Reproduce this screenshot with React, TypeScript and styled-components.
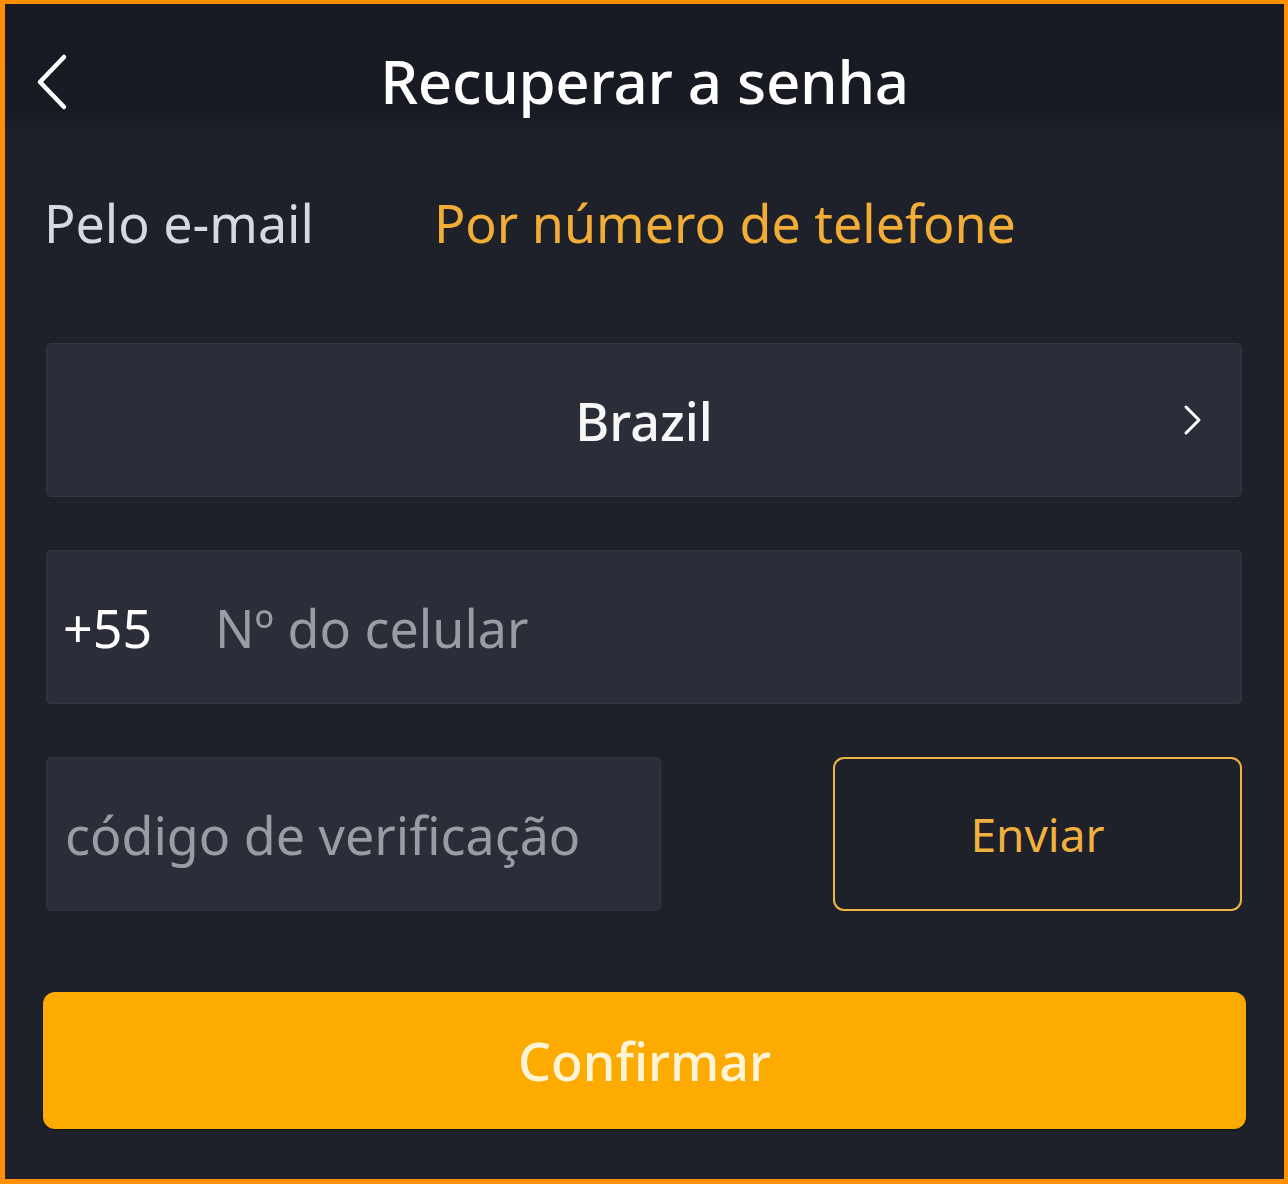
import styled, { createGlobalStyle } from "styled-components";

const GlobalStyle = createGlobalStyle`
  html, body {
    margin: 0;
    padding: 0;
    background: #1e212a;
  }
  * {
    box-sizing: border-box;
  }
`;

// Page frame
const Screen = styled.div`
  width: 1288px;
  height: 1184px;
  border: 4px solid #ff8f00;
  border-left-width: 5px;
  border-bottom-width: 5px;
  background: #1e212a;
  font-family: "Noto Sans", "Open Sans", sans-serif;
  display: flex;
  flex-direction: column;
  overflow: hidden;
`;

const Header = styled.header`
  height: 126px;
  flex-shrink: 0;
  background: linear-gradient(#171a22 0%, #181b23 85%, #1e212a 100%);
  display: grid;
  grid-template-columns: 120px 1fr 120px;
  align-items: center;
`;

const BackButton = styled.button`
  background: none;
  border: none;
  padding: 30px 0 0 29px;
  height: 100%;
  display: flex;
  align-items: center;
  cursor: pointer;
`;

const Title = styled.h1`
  margin: 0;
  text-align: center;
  color: #ffffff;
  font-size: 60px;
  font-weight: 500;
  letter-spacing: -0.3px;
  padding-top: 28px;
`;

const Tabs = styled.nav`
  display: flex;
  align-items: flex-start;
  gap: 120px;
  padding: 58px 0 0 39px;
  height: 213px;
`;

interface TabProps {
  $active?: boolean;
}

const Tab = styled.span<TabProps>`
  font-size: 52px;
  line-height: 70px;
  color: ${(p) => (p.$active ? "#f2ad36" : "#d8d9de")};
  cursor: pointer;
`;

const Form = styled.div`
  display: flex;
  flex-direction: column;
  padding: 0 42px 0 41px;
  gap: 53px;
`;

const Field = styled.div`
  height: 154px;
  background: #2b2e38;
  border: 1px solid #343742;
  border-radius: 5px;
  display: flex;
  align-items: center;
  font-size: 52px;
`;

const SelectField = styled(Field)`
  justify-content: center;
  position: relative;
  cursor: pointer;
`;

const Country = styled.span`
  color: #f7f7f8;
  font-weight: 500;
`;

const ChevronSlot = styled.span`
  position: absolute;
  right: 38px;
  top: 50%;
  transform: translateY(-50%);
  display: flex;
`;

const Prefix = styled.span`
  color: #ffffff;
  padding-left: 16px;
  width: 168px;
  flex-shrink: 0;
`;

const Placeholder = styled.span`
  color: #9a9ca4;
`;

const CodeRow = styled.div`
  display: flex;
  justify-content: space-between;
  align-items: center;
`;

const CodeField = styled(Field)`
  width: 615px;
  padding-left: 18px;
`;

const SendButton = styled.button`
  width: 409px;
  height: 154px;
  background: transparent;
  border: 2px solid #f0b445;
  border-radius: 11px;
  color: #f2b03e;
  font-family: inherit;
  font-size: 46px;
  cursor: pointer;
`;

const ConfirmButton = styled.button`
  margin: 81px 38px 0;
  height: 137px;
  background: #fdab00;
  border: none;
  border-radius: 12px;
  box-shadow: 0 1px 2px rgba(0, 0, 0, 0.5);
  color: #fff4d6;
  font-family: inherit;
  font-size: 52px;
  font-weight: 500;
  cursor: pointer;
`;

const ChevronLeft = () => (
  <svg width="34" height="58" viewBox="0 0 34 58" fill="none">
    <path
      d="M30 4 L6 29 L30 54"
      stroke="#ffffff"
      strokeWidth="4.5"
      strokeLinecap="round"
      strokeLinejoin="round"
    />
  </svg>
);

const ChevronRight = () => (
  <svg width="20" height="32" viewBox="0 0 20 32" fill="none">
    <path
      d="M3 3 L16 16 L3 29"
      stroke="#ffffff"
      strokeWidth="3"
      strokeLinecap="round"
      strokeLinejoin="round"
    />
  </svg>
);

export default function App() {
  return (
    <>
      <GlobalStyle />
      <Screen>
        <Header>
          <BackButton aria-label="Voltar">
            <ChevronLeft />
          </BackButton>
          <Title>Recuperar a senha</Title>
          <span />
        </Header>

        <Tabs>
          <Tab>Pelo e-mail</Tab>
          <Tab $active>Por número de telefone</Tab>
        </Tabs>

        <Form>
          <SelectField>
            <Country>Brazil</Country>
            <ChevronSlot>
              <ChevronRight />
            </ChevronSlot>
          </SelectField>

          <Field>
            <Prefix>+55</Prefix>
            <Placeholder>Nº do celular</Placeholder>
          </Field>

          <CodeRow>
            <CodeField>
              <Placeholder>código de verificação</Placeholder>
            </CodeField>
            <SendButton>Enviar</SendButton>
          </CodeRow>
        </Form>

        <ConfirmButton>Confirmar</ConfirmButton>
      </Screen>
    </>
  );
}
